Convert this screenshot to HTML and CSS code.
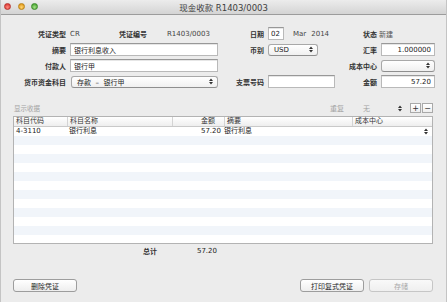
FILE: index.html
```html
<!DOCTYPE html>
<html>
<head>
    <title>现金收款 R1403/0003</title>
    <link rel="stylesheet" href="styles.css">
</head>
<body>
<div class="window">
    <div class="titlebar">
        <div class="lights">
            <span class="light red"></span>
            <span class="light yellow"></span>
            <span class="light green"></span>
        </div>
        <div class="title">现金收款 R1403/0003</div>
    </div>

    <div class="content">
        <div class="form-grid">
            <!-- строка 1 -->
            <label class="lbl">凭证类型</label>
            <div class="cell">
                <span class="val w-cr">CR</span>
                <span class="lbl-inline w-no">凭证编号</span>
                <span class="val">R1403/0003</span>
            </div>
            <label class="lbl">日期</label>
            <div class="cell">
                <input class="field day" value="02">
                <span class="val month">Mar</span>
                <span class="val year">2014</span>
            </div>
            <label class="lbl">状态</label>
            <div class="cell"><span class="val status">新建</span></div>

            <!-- строка 2 -->
            <label class="lbl">摘要</label>
            <input class="field" value="银行利息收入">
            <label class="lbl">币别</label>
            <div class="cell">
                <div class="popup currency">
                    <span>USD</span>
                    <svg class="arrows" width="4" height="7" viewBox="0 0 4 7"><path d="M0 3L2 0.5L4 3Z M0 4L2 6.5L4 4Z"/></svg>
                </div>
            </div>
            <label class="lbl">汇率</label>
            <input class="field num" value="1.000000">

            <!-- строка 3 -->
            <label class="lbl">付款人</label>
            <input class="field" value="银行甲">
            <span></span>
            <span></span>
            <label class="lbl">成本中心</label>
            <div class="popup">
                <span></span>
                <svg class="arrows" width="4" height="7" viewBox="0 0 4 7"><path d="M0 3L2 0.5L4 3Z M0 4L2 6.5L4 4Z"/></svg>
            </div>

            <!-- строка 4 -->
            <label class="lbl">货币资金科目</label>
            <div class="popup account">
                <span>存款 &nbsp;–&nbsp; 银行甲</span>
                <svg class="arrows" width="4" height="7" viewBox="0 0 4 7"><path d="M0 3L2 0.5L4 3Z M0 4L2 6.5L4 4Z"/></svg>
            </div>
            <label class="lbl">支票号码</label>
            <input class="field" value="">
            <label class="lbl">金额</label>
            <input class="field num" value="57.20">
        </div>

        <div class="lines-bar">
            <span class="muted small">显示收据</span>
            <div class="lines-tools">
                <span class="muted w-repeat">重复</span>
                <span class="muted w-none">无</span>
                <svg class="arrows step" width="4" height="7" viewBox="0 0 4 7"><path d="M0 3L2 0.5L4 3Z M0 4L2 6.5L4 4Z"/></svg>
                <button class="sq">+</button>
                <button class="sq">−</button>
            </div>
        </div>

        <div class="table">
            <div class="thead">
                <div class="th">科目代码</div>
                <div class="th">科目名称</div>
                <div class="th right">金额</div>
                <div class="th">摘要</div>
                <div class="th">成本中心</div>
            </div>
            <div class="tbody">
                <div class="tr">
                    <div class="td">4-3110</div>
                    <div class="td">银行利息</div>
                    <div class="td right amt">57.20</div>
                    <div class="td">银行利息</div>
                    <div class="td stepper">
                        <svg class="arrows" width="4" height="7" viewBox="0 0 4 7"><path d="M0 3L2 0.5L4 3Z M0 4L2 6.5L4 4Z"/></svg>
                    </div>
                </div>
                <div class="tr"></div>
                <div class="tr"></div>
                <div class="tr"></div>
                <div class="tr"></div>
                <div class="tr"></div>
                <div class="tr"></div>
                <div class="tr"></div>
                <div class="tr"></div>
                <div class="tr"></div>
                <div class="tr"></div>
                <div class="tr"></div>
                <div class="tr"></div>
            </div>
        </div>

        <div class="total">
            <span class="lbl-inline">总计</span>
            <span class="val total-val">57.20</span>
        </div>

        <div class="footer">
            <button class="btn">删除凭证</button>
            <div class="footer-right">
                <button class="btn">打印复式凭证</button>
                <button class="btn" disabled>存储</button>
            </div>
        </div>
    </div>
</div>
</body>
</html>
```

FILE: styles.css
```css
body { margin: 0; background: #ececec; }
.window { width: 447px; height: 302px; box-sizing: border-box; background: #ececec; border-left: 1px solid #c4c4c4; border-right: 1px solid #c4c4c4; overflow: hidden; font-family: "DejaVu Sans", "Noto Sans CJK SC", sans-serif; font-size: 7px; color: #222; }

.titlebar { position: relative; height: 14px; background: linear-gradient(#ececec, #d4d4d4); border-bottom: 1px solid #9c9c9c; display: flex; align-items: center; justify-content: center; }
.lights { position: absolute; left: 3px; top: 3px; display: flex; gap: 6.5px; }
.light { width: 7px; height: 7px; border-radius: 50%; box-sizing: border-box; }
.red { background: radial-gradient(circle at 50% 65%, #ff8a80, #e0443e 70%); border: 0.5px solid #b9332e; }
.yellow { background: radial-gradient(circle at 50% 65%, #ffd776, #e6a022 70%); border: 0.5px solid #b98319; }
.green { background: radial-gradient(circle at 50% 65%, #a6e08a, #54ad3c 70%); border: 0.5px solid #3d8b2b; }
.title { font-size: 8.5px; color: #3e3e3e; }

.content { padding: 12px 13px 0 12px; }

.form-grid { display: grid; grid-template-columns: 54px 148px 44px 67px 40px 54px; grid-template-rows: repeat(4, 13px); column-gap: 3px; row-gap: 3px; align-items: center; }
.lbl { text-align: right; font-weight: bold; color: #333; white-space: nowrap; padding-right: 1px; }
.lbl-inline { font-weight: bold; color: #333; white-space: nowrap; }
.cell { display: flex; align-items: center; height: 13px; white-space: nowrap; }
.val { color: #444; }
.w-cr { width: 49px; }
.w-no { width: 48px; }
.month { margin-left: 9px; }
.year { margin-left: 5px; }
.status { margin-left: -2px; color: #555; }

.field { box-sizing: border-box; height: 13px; width: 100%; margin: 0; border: 1px solid #b9b9b9; border-top-color: #989898; background: #fff; padding: 0 3px; font-family: "DejaVu Sans", "Noto Sans CJK SC", sans-serif; font-size: 7px; color: #222; outline: none; box-shadow: inset 0 1px 0 #e6e6e6; }
.field.num { text-align: right; }
.field.day { width: 16px; padding: 0 2px; }

.popup { box-sizing: border-box; height: 12px; display: flex; align-items: center; justify-content: space-between; padding: 0 4px 0 5px; border: 1px solid #a8a8a8; border-bottom-color: #8e8e8e; border-radius: 3px; background: linear-gradient(#ffffff, #f0f0f0); color: #222; white-space: nowrap; }
.popup.currency { width: 50px; }
.popup.account { margin-left: 1px; }
.arrows { fill: #333; display: block; }

.lines-bar { margin-top: 15px; height: 10px; display: flex; align-items: center; }
.muted { color: #a3a3a3; }
.small { font-size: 6.5px; margin-left: 1px; }
.lines-tools { margin-left: auto; display: flex; align-items: center; }
.w-repeat { width: 33px; }
.w-none { width: 35px; }
.step { margin-right: 7px; }
.sq { box-sizing: border-box; width: 11px; height: 10px; margin: 0 0 0 1px; padding: 0; border: 1px solid #a9a9a9; background: linear-gradient(#ffffff, #efefef); font-family: "DejaVu Sans", sans-serif; font-size: 8px; line-height: 7px; color: #333; }

.table { margin-top: 3px; border: 1px solid #b3b3b3; background: #fff; }
.thead, .tr { display: grid; grid-template-columns: 53px 105px 52px 128px 1fr; }
.thead { height: 9px; background: linear-gradient(#ffffff, #eeeeee); border-bottom: 1px solid #c9c9c9; }
.th { font-size: 7px; color: #333; line-height: 9px; padding-left: 2px; border-left: 1px solid #d4d4d4; white-space: nowrap; }
.th:first-child { border-left: none; }
.th.right { text-align: right; padding-right: 9px; }
.tbody { height: 116px; overflow: hidden; }
.tr { height: 9px; }
.tr:nth-child(even) { background: #f1f5fa; }
.td { line-height: 9px; padding-left: 2px; color: #222; white-space: nowrap; }
.td.amt { text-align: right; padding-right: 3px; }
.td:nth-child(4) { padding-left: 0; }
.stepper { display: flex; justify-content: flex-end; align-items: center; padding-right: 4px; }

.total { margin-top: 2px; height: 9px; display: flex; align-items: center; padding-left: 130px; }
.total-val { width: 60px; text-align: right; color: #222; }

.footer { margin-top: 24px; display: flex; align-items: center; }
.footer-right { margin-left: auto; display: flex; gap: 5px; }
.btn { box-sizing: border-box; width: 64px; height: 13px; padding: 0; border: 1px solid #9d9d9d; border-radius: 3px; background: linear-gradient(#ffffff, #eeeeee); font-family: "DejaVu Sans", "Noto Sans CJK SC", sans-serif; font-size: 7px; color: #222; }
.btn:disabled { border-color: #c6c6c6; color: #a8a8a8; background: linear-gradient(#f9f9f9, #efefef); }
```
